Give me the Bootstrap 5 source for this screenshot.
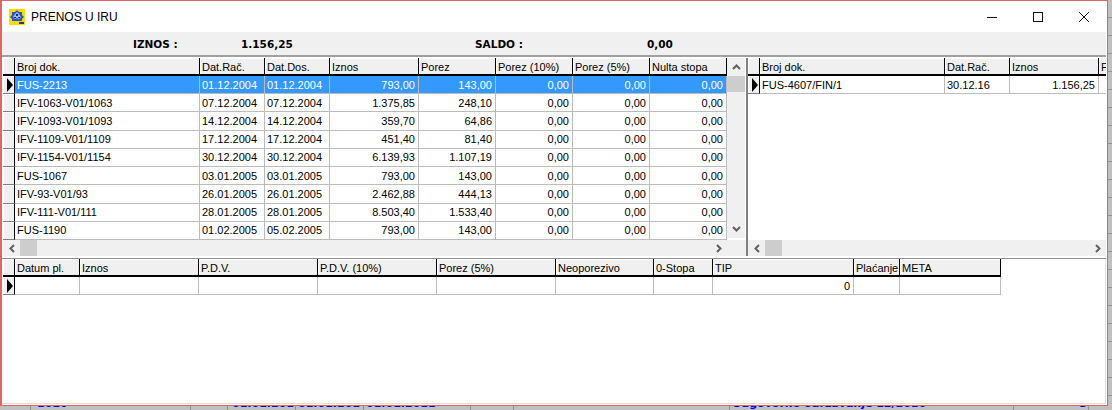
<!DOCTYPE html>
<html lang="hr"><head><meta charset="utf-8"><title>Prenos u IRU</title>
<link href="https://cdn.jsdelivr.net/npm/bootstrap@5.3.0/dist/css/bootstrap.min.css" rel="stylesheet">
<style>
html,body{width:1112px;height:410px;overflow:hidden;margin:0}
body{background:#c0c0c0;font:11px/1 "Liberation Sans",sans-serif;color:#000}
.stage{height:406px}
.win{width:1108px;height:406px;background:#fff;border:1px solid #e06666;border-left-width:2px;padding-right:1px;flex:none}
.tbar{height:31px;padding-left:7px;font-size:12px;gap:6px;flex:none}
.tbar svg{display:block}
.wbtns{margin-left:auto;margin-right:-1px}
.wbtn{width:46px;height:31px}
.sumbar{height:25px;flex:none;background:#f0f0f0;font:bold 10.5px "DejaVu Sans",sans-serif;border-bottom:2px solid #a0a0a0}
.lab1{margin-left:131px;width:108px}
.val1{width:234px}
.lab2{width:172px}
.panes{height:202px;flex:none;padding:1px 0 2px 1px;border-bottom:1px solid #909090}
.lpane{width:743px;flex:none}
.rpane{flex:1;min-width:0;border-left:2px solid #808080;overflow:hidden}
.gridarea{height:182px;overflow:hidden}
.gtab{table-layout:fixed;border-collapse:separate;border-spacing:0;font:11px "Liberation Sans",sans-serif}
.gtab th,.gtab td{height:18px;padding:0 3px 0 2px;white-space:nowrap;overflow:hidden;box-sizing:border-box}
.gtab th{font-weight:400;background:#f0f0f0;border-right:1px solid #000;border-bottom:2px solid #000;box-shadow:inset 1px 1px 0 #fff;padding-top:1px;color:#000}
.gtab td{border-right:1px solid #bcbcbc;border-bottom:1px solid #bcbcbc}
.gtab td.ind,.gtab th.ind{background:#f0f0f0;border-right:1px solid #000;border-bottom:1px solid #808080;box-shadow:inset 1px 1px 0 #fff;padding:0}
.gtab th.ind{border-bottom:2px solid #000}
.gtab td.rt{text-align:right}
.gtab tr.sel td:not(.ind){background:#3399ff;color:#fff}
.arrow{display:block;margin-left:4px}
.vbar{width:18px;height:180px;flex:none;background:#f0f0f0}
.sb-btn{width:18px;height:18px;flex:none}
.vthumb{width:18px;height:16px;background:#cdcdcd}
.vtrack{flex:1}
.hbar{height:16px;background:#f0f0f0}
.hbar-l{padding-right:19px}
.hthumb{width:17px;height:16px;background:#cdcdcd}
.hbtn{width:17px;height:16px;flex:none}
.bottomgrid{padding-left:1px;flex:1;border-bottom:1px solid #e0e0e0;border-right:1px solid #e0e0e0;margin-bottom:1px}
.strip{height:4px;overflow:hidden;color:#0000e0;font:bold 11px/13px "DejaVu Sans",sans-serif;background:#c0c0c0}
.stripin{margin-top:0;height:4px;padding-left:30px}
.cell{flex:none;height:4px;border-left:1px solid #909090;position:relative;overflow:hidden}
.cell b{display:block;margin-top:-9px;font-weight:700;white-space:nowrap}
.c1{width:160px;padding-left:6px}.c2{width:37px}.c3{width:68px;padding-left:4px}.c4{width:68px;padding-left:2px}.c5{width:107px;padding-left:2px}.c6{width:43px}.c7{width:216px}.c8{width:284px;padding-left:2px}.c9{width:75px;text-align:right;padding-right:1px}.c10{width:24px;border-right:0}
.side{width:4px;height:406px;flex:none;background:repeating-linear-gradient(#c0c0c0 0 17px,#929292 17px 18px)}
</style></head><body>
<div class="stage d-flex">
<div class="win d-flex flex-column">
 <div class="tbar d-flex align-items-center">
  <svg width="16" height="16" viewBox="0 0 16 16"><rect width="16" height="16" fill="#ffd800"/><path d="M8 1 10 3 13 3 13 6 15 8 13 10 13 12 3 12 3 10 1 8 3 6 3 3 6 3Z" fill="#2a55c8"/><path d="M8 3 10 5 12 8 10 10 8 9 6 10 4 8 6 5Z" fill="#9fb6ea"/><path d="M7 5h2v2H7zM5 8h2v1H5zM9 8h2v1H9z" fill="#10307f"/><path d="M10 13h5v2h-5z" fill="#1d3a8a"/></svg>
  <span>PRENOS U IRU</span>
  <div class="wbtns d-flex">
   <div class="wbtn d-flex align-items-center justify-content-center"><svg width="12" height="12"><path d="M1 6.5H11" stroke="#111"/></svg></div>
   <div class="wbtn d-flex align-items-center justify-content-center"><svg width="12" height="12"><rect x="1.5" y="1.5" width="9" height="9" fill="none" stroke="#111"/></svg></div>
   <div class="wbtn d-flex align-items-center justify-content-center"><svg width="12" height="12"><path d="M1 1 11 11M11 1 1 11" stroke="#111"/></svg></div>
  </div>
 </div>
 <div class="sumbar d-flex align-items-center"><span class="lab1">IZNOS :</span><span class="val1">1.156,25</span><span class="lab2">SALDO :</span><span>0,00</span></div>
 <div class="panes d-flex">
  <div class="lpane">
   <div class="d-flex gridarea">
    <table class="gtab" style="width:724px"><colgroup><col style="width:12px"><col style="width:185px"><col style="width:65px"><col style="width:65px"><col style="width:89px"><col style="width:77px"><col style="width:77px"><col style="width:77px"><col style="width:77px"></colgroup>
    <thead><tr><th class="ind"></th><th>Broj dok.</th><th>Dat.Rač.</th><th>Dat.Dos.</th><th>Iznos</th><th>Porez</th><th>Porez (10%)</th><th>Porez (5%)</th><th>Nulta stopa</th></tr></thead>
    <tbody id="lbody"></tbody></table>
    <div class="vbar d-flex flex-column">
     <div class="sb-btn d-flex align-items-center justify-content-center"><svg width="9" height="6"><path d="M1 5 4.5 1.5 8 5" fill="none" stroke="#606060" stroke-width="2"/></svg></div>
     <div class="vthumb"></div><div class="vtrack"></div>
     <div class="sb-btn d-flex align-items-center justify-content-center"><svg width="9" height="6"><path d="M1 1 4.5 4.5 8 1" fill="none" stroke="#606060" stroke-width="2"/></svg></div>
    </div>
   </div>
   <div class="hbar hbar-l d-flex align-items-center">
    <div class="hbtn d-flex align-items-center justify-content-center"><svg width="6" height="9"><path d="M5 1 1.5 4.5 5 8" fill="none" stroke="#606060" stroke-width="2"/></svg></div>
    <div class="hthumb"></div><div class="flex-grow-1"></div>
    <div class="hbtn d-flex align-items-center justify-content-center"><svg width="6" height="9"><path d="M1 1 4.5 4.5 1 8" fill="none" stroke="#606060" stroke-width="2"/></svg></div>
   </div>
  </div>
  <div class="rpane">
   <div class="gridarea">
    <table class="gtab" style="width:440px"><colgroup><col style="width:12px"><col style="width:185px"><col style="width:65px"><col style="width:89px"><col style="width:89px"></colgroup>
    <thead><tr><th class="ind"></th><th>Broj dok.</th><th>Dat.Rač.</th><th>Iznos</th><th>Porez</th></tr></thead>
    <tbody><tr><td class="ind"><svg class="arrow" width="6" height="14"><path d="M0 0 6 7 0 14Z"/></svg></td><td>FUS-4607/FIN/1</td><td>30.12.16</td><td class="rt">1.156,25</td><td></td></tr></tbody></table>
   </div>
   <div class="hbar d-flex align-items-center">
    <div class="hbtn d-flex align-items-center justify-content-center"><svg width="6" height="9"><path d="M5 1 1.5 4.5 5 8" fill="none" stroke="#606060" stroke-width="2"/></svg></div>
    <div class="hthumb"></div><div class="flex-grow-1"></div>
    <div class="hbtn d-flex align-items-center justify-content-center"><svg width="6" height="9"><path d="M1 1 4.5 4.5 1 8" fill="none" stroke="#606060" stroke-width="2"/></svg></div>
   </div>
  </div>
 </div>
 <div class="bottomgrid">
  <table class="gtab" style="width:998px"><colgroup><col style="width:12px"><col style="width:65px"><col style="width:119px"><col style="width:119px"><col style="width:119px"><col style="width:119px"><col style="width:98px"><col style="width:59px"><col style="width:141px"><col style="width:46px"><col style="width:101px"></colgroup>
  <thead><tr><th class="ind"></th><th>Datum pl.</th><th>Iznos</th><th>P.D.V.</th><th>P.D.V. (10%)</th><th>Porez (5%)</th><th>Neoporezivo</th><th>0-Stopa</th><th>TIP</th><th>Plaćanje</th><th>META</th></tr></thead>
  <tbody><tr><td class="ind"><svg class="arrow" width="6" height="14"><path d="M0 0 6 7 0 14Z"/></svg></td><td></td><td></td><td></td><td></td><td></td><td></td><td></td><td class="rt">0</td><td></td><td></td></tr></tbody></table>
 </div>
</div>
<div class="side"></div>
</div>
<div class="strip"><div class="stripin d-flex"><div class="cell c1"><b>1010</b></div><div class="cell c2"></div><div class="cell c3"><b>01.01.201</b></div><div class="cell c4"><b>01.01.201</b></div><div class="cell c5"><b>01.01.2011</b></div><div class="cell c6"></div><div class="cell c7"></div><div class="cell c8"><b>Odgovorno održavanje 12/2016</b></div><div class="cell c9"><b>3</b></div><div class="cell c10"></div></div></div>
<script>
const rows=[["FUS-2213","01.12.2004","01.12.2004","793,00","143,00"],["IFV-1063-V01/1063","07.12.2004","07.12.2004","1.375,85","248,10"],["IFV-1093-V01/1093","14.12.2004","14.12.2004","359,70","64,86"],["IFV-1109-V01/1109","17.12.2004","17.12.2004","451,40","81,40"],["IFV-1154-V01/1154","30.12.2004","30.12.2004","6.139,93","1.107,19"],["FUS-1067","03.01.2005","03.01.2005","793,00","143,00"],["IFV-93-V01/93","26.01.2005","26.01.2005","2.462,88","444,13"],["IFV-111-V01/111","28.01.2005","28.01.2005","8.503,40","1.533,40"],["FUS-1190","01.02.2005","05.02.2005","793,00","143,00"]];
document.getElementById('lbody').innerHTML=rows.map((r,i)=>`<tr${i==0?' class="sel"':''}><td class="ind">${i==0?'<svg class="arrow" width="6" height="14"><path d="M0 0 6 7 0 14Z"/></svg>':''}</td><td>${r[0]}</td><td>${r[1]}</td><td>${r[2]}</td><td class="rt">${r[3]}</td><td class="rt">${r[4]}</td><td class="rt">0,00</td><td class="rt">0,00</td><td class="rt">0,00</td></tr>`).join('');
</script>
</body></html>
